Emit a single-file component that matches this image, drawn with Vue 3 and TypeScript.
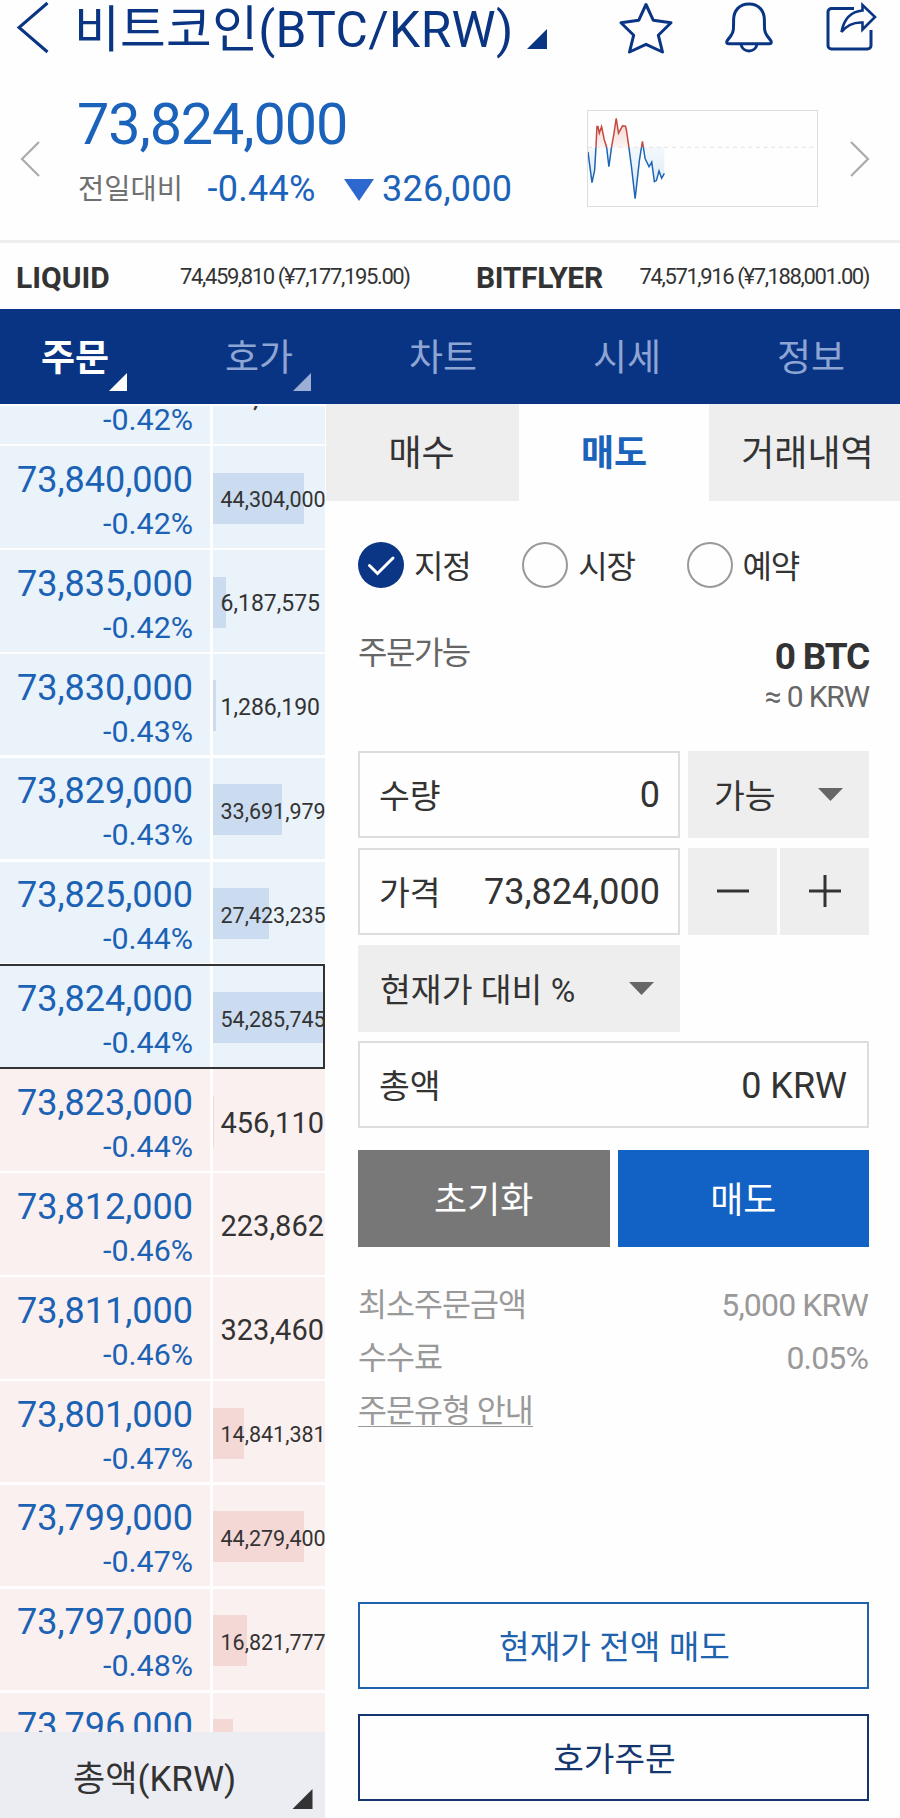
<script setup lang="ts">
import { ref } from 'vue'

interface Quote {
  price: string
  rate: string
  amount: string
  bar: number
  side: 'ask' | 'bid'
  current?: boolean
}

const quotes: Quote[] = [
  { price: '73,842,000', rate: '-0.42%', amount: '44,000', bar: 0, side: 'ask' },
  { price: '73,840,000', rate: '-0.42%', amount: '44,304,000', bar: 91, side: 'ask' },
  { price: '73,835,000', rate: '-0.42%', amount: '6,187,575', bar: 13, side: 'ask' },
  { price: '73,830,000', rate: '-0.43%', amount: '1,286,190', bar: 2.5, side: 'ask' },
  { price: '73,829,000', rate: '-0.43%', amount: '33,691,979', bar: 69, side: 'ask' },
  { price: '73,825,000', rate: '-0.44%', amount: '27,423,235', bar: 56, side: 'ask' },
  { price: '73,824,000', rate: '-0.44%', amount: '54,285,745', bar: 112, side: 'ask', current: true },
  { price: '73,823,000', rate: '-0.44%', amount: '456,110', bar: 1, side: 'bid' },
  { price: '73,812,000', rate: '-0.46%', amount: '223,862', bar: 0, side: 'bid' },
  { price: '73,811,000', rate: '-0.46%', amount: '323,460', bar: 0, side: 'bid' },
  { price: '73,801,000', rate: '-0.47%', amount: '14,841,381', bar: 31, side: 'bid' },
  { price: '73,799,000', rate: '-0.47%', amount: '44,279,400', bar: 91, side: 'bid' },
  { price: '73,797,000', rate: '-0.48%', amount: '16,821,777', bar: 34, side: 'bid' },
  { price: '73,796,000', rate: '-0.48%', amount: '9,821,000', bar: 20, side: 'bid' },
]

// Longer amounts are set smaller so that they stay inside the column.
function amountSize(amount: string): string {
  if (amount.length >= 10) return 'small'
  return amount.length >= 9 ? 'medium' : 'large'
}

const menus = [
  { name: '주문', mark: true },
  { name: '호가', mark: true },
  { name: '차트', mark: false },
  { name: '시세', mark: false },
  { name: '정보', mark: false },
]
const menu = ref('주문')

const sides = ['매수', '매도', '거래내역']
const side = ref('매도')

const kinds = ['지정', '시장', '예약']
const kind = ref('지정')

const spark =
  '82,455 94,548 102,510 106,440 109,378 112,378 116,398 123,378 131,418 138,440 145,500 153,440 160,400 167,353 174,398 186,376 195,377 198,390 205,440 213,500 224,597 237,480 246,423 254,475 266,500 274,486 282,545 288,542 296,513 304,535 312,520'
</script>

<template>
  <div class="page">
    <header class="top">
      <svg class="back" viewBox="0 0 34 54"><path d="M31.5 2 3 26.5 31.5 51" /></svg>
      <h1>비트코인(BTC/KRW)</h1>
      <svg class="corner title-mark" viewBox="0 0 20 20"><path d="M20 0v20H0z" /></svg>
      <div class="actions">
        <svg class="star" viewBox="0 0 54 52">
          <path d="M27 2.5 34.2 18.2 52 20.8 39.3 33.2 43.5 50 27 42.3 10.5 50 14.7 33.2 2 20.8 19.8 18.2Z" />
        </svg>
        <svg class="bell" viewBox="0 0 48 52">
          <path d="M24 2C14 2 8.600 9 8.600 18c0 9.500 0 12-2.500 15.500L2.300 38.500C1 41 2 41.700 4 41.700H44C46 41.700 47 41 45.700 38.500L41.900 33.500C39.400 30 39.400 27.500 39.400 18 39.400 9 34 2 24 2Z" />
          <path d="M16 42.500a8.200 8.200 0 0 0 16 0" />
        </svg>
        <svg class="share" viewBox="0 0 52 50">
          <path d="M28 6.500H5.500a3.500 3.500 0 0 0-3.500 3.500V43.500a3.500 3.500 0 0 0 3.500 3.500H41.500a3.500 3.500 0 0 0 3.500-3.500V28" />
          <path class="arrow" d="M15.500 30C18 16.500 25.500 9.500 36.500 8.500V3L49 15 36.500 27.500V20.500C28 20 21 23 15.500 30Z" />
        </svg>
      </div>
    </header>

    <section class="summary">
      <svg class="chev" viewBox="0 0 20 36"><path d="M19 1 2 18 19 35" /></svg>
      <div class="figures">
        <div class="last">73,824,000</div>
        <div class="change">
          <span class="change-label">전일대비</span>
          <span class="change-rate">-0.44%</span>
          <svg class="down" viewBox="0 0 30 22"><path d="M0 0h30L15 22z" /></svg>
          <span class="change-diff">326,000</span>
        </div>
      </div>
      <svg class="spark" viewBox="82 331 690 288" preserveAspectRatio="none">
        <defs>
          <clipPath id="above"><rect x="82" y="331" width="690" height="110" /></clipPath>
          <clipPath id="below"><rect x="82" y="441" width="690" height="178" /></clipPath>
          <linearGradient id="redFade" gradientUnits="userSpaceOnUse" x1="0" y1="350" x2="0" y2="441">
            <stop offset="0" stop-color="#e3a09a" stop-opacity=".5" />
            <stop offset="1" stop-color="#e3a09a" stop-opacity="0.1" />
          </linearGradient>
          <linearGradient id="blueFade" gradientUnits="userSpaceOnUse" x1="0" y1="441" x2="0" y2="600">
            <stop offset="0" stop-color="#8fbbe6" stop-opacity=".1" />
            <stop offset="1" stop-color="#8fbbe6" stop-opacity=".35" />
          </linearGradient>
        </defs>
        <polygon :points="`82,441 ${spark} 312,441`" fill="url(#redFade)" clip-path="url(#above)" />
        <polygon :points="`82,441 ${spark} 312,441`" fill="url(#blueFade)" clip-path="url(#below)" />
        <path class="base" d="M82 441H762" />
        <polyline class="up-line" :points="spark" clip-path="url(#above)" />
        <polyline class="down-line" :points="spark" clip-path="url(#below)" />
      </svg>
      <svg class="chev next" viewBox="0 0 20 36"><path d="M1 1 18 18 1 35" /></svg>
    </section>

    <section class="markets">
      <b class="m1">LIQUID</b><span class="q1">74,459,810 (¥7,177,195.00)</span>
      <b class="m2">BITFLYER</b><span class="q2">74,571,916 (¥7,188,001.00)</span>
    </section>

    <nav class="menu">
      <div class="menu-grid">
        <a v-for="m in menus" :key="m.name" :class="{ on: m.name === menu }" @click="menu = m.name">
          {{ m.name }}
          <svg v-if="m.mark" class="corner" viewBox="0 0 20 20"><path d="M20 0v20H0z" /></svg>
        </a>
      </div>
    </nav>

    <main class="body">
      <aside class="book">
        <div class="book-view">
          <div class="rows">
            <div v-for="q in quotes" :key="q.price" class="row" :class="[q.side, { current: q.current }]">
              <div class="cell price-cell">
                <span class="price">{{ q.price }}</span>
                <span class="rate">{{ q.rate }}</span>
              </div>
              <div class="cell amount-cell">
                <i class="bar" :style="{ width: q.bar + 'px' }"></i>
                <span class="amount" :class="amountSize(q.amount)">{{ q.amount }}</span>
              </div>
            </div>
          </div>
        </div>
        <div class="book-foot">
          <span>총액(KRW)</span>
          <svg class="corner" viewBox="0 0 20 20"><path d="M20 0v20H0z" /></svg>
        </div>
      </aside>

      <section class="order">
        <div class="sides">
          <a v-for="s in sides" :key="s" :class="{ on: s === side }" @click="side = s">{{ s }}</a>
        </div>

        <div class="form">
          <div class="kinds">
            <label v-for="k in kinds" :key="k" @click="kind = k">
              <svg class="radio" :class="{ on: k === kind }" viewBox="0 0 46 46">
                <circle cx="23" cy="23" r="22" />
                <path v-if="k === kind" d="M11.500 23.500 19.500 31.500 35 16" />
              </svg>
              <span>{{ k }}</span>
            </label>
          </div>

          <div class="available">
            <span class="available-label">주문가능</span>
            <div class="balance">
              <b>0 BTC</b>
              <span>≈ 0 KRW</span>
            </div>
          </div>

          <div class="fields">
            <div class="field"><span>수량</span><em>0</em></div>
            <div class="select">
              <span>가능</span>
              <svg class="caret" viewBox="0 0 25 13"><path d="M0 0h25L12.500 13z" /></svg>
            </div>
            <div class="field"><span>가격</span><em>73,824,000</em></div>
            <div class="steps">
              <button><svg viewBox="0 0 34 34"><path d="M1 17H33" /></svg></button>
              <button><svg viewBox="0 0 34 34"><path d="M1 17H33M17 1V33" /></svg></button>
            </div>
            <div class="select ratio">
              <span>현재가 대비 %</span>
              <svg class="caret" viewBox="0 0 25 13"><path d="M0 0h25L12.500 13z" /></svg>
            </div>
            <div class="field total"><span>총액</span><em>0 KRW</em></div>
          </div>

          <div class="submit">
            <button class="reset">초기화</button>
            <button class="sell">매도</button>
          </div>

          <div class="notes">
            <div><span>최소주문금액</span><em>5,000 KRW</em></div>
            <div><span>수수료</span><em>0.05%</em></div>
            <div><a>주문유형 안내</a></div>
          </div>

          <div class="extra">
            <button class="sell-all">현재가 전액 매도</button>
            <button class="book-order">호가주문</button>
          </div>
        </div>
      </section>
    </main>
  </div>
</template>

<style>
html,
body {
  background: #fefefe;
}
</style>

<style scoped>
* {
  box-sizing: border-box;
}
.page {
  width: 900px;
  height: 1818px;
  overflow: hidden;
  display: flex;
  flex-direction: column;
  background: #fefefe;
  color: #333;
  font-family: Roboto, 'Noto Sans CJK KR', sans-serif;
  line-height: 1.2;
  white-space: nowrap;
}
svg {
  display: block;
  flex: none;
  fill: none;
}
em {
  font-style: normal;
}
button {
  font: inherit;
  color: inherit;
  border: 0;
  padding: 0;
  background: none;
}
.corner path {
  fill: currentColor;
}

.top {
  height: 61px;
  flex: none;
  display: flex;
  align-items: flex-start;
  color: #0a3583;
}
.back {
  width: 34px;
  height: 54px;
  margin: 1px 0 0 16px;
  stroke: currentColor;
  stroke-width: 3;
}
h1 {
  margin: 0 0 0 24px;
  width: 453px;
  font-size: 49.700px;
  font-weight: 400;
  line-height: 61px;
  letter-spacing: 0.350px;
}
.title-mark {
  width: 20px;
  height: 20px;
  margin-top: 29px;
}
.actions {
  display: flex;
  margin-left: 72px;
  stroke: currentColor;
  stroke-width: 3;
  stroke-linejoin: round;
}
.star {
  width: 54px;
  height: 52px;
  margin-top: 2px;
}
.bell {
  width: 48px;
  height: 52px;
  margin: 2px 0 0 51.500px;
}
.share {
  width: 52px;
  height: 50px;
  margin: 2px 0 0 53.500px;
}
.arrow {
  stroke-linejoin: miter;
  stroke-width: 2.600;
}

.summary {
  height: 179px;
  flex: none;
  display: flex;
  align-items: flex-start;
  color: #1b62bb;
}
.chev {
  width: 20px;
  height: 36px;
  margin: 80px 0 0 20px;
  stroke: #ababab;
  stroke-width: 2.200;
}
.figures {
  width: 511px;
  margin: 29px 0 0 36px;
}
.last {
  margin-left: 1px;
  font-size: 57.500px;
  line-height: 69px;
  letter-spacing: -1.100px;
}
.change {
  display: flex;
  align-items: center;
  height: 40px;
  margin-top: 10px;
  font-size: 36px;
  line-height: 40px;
  letter-spacing: 0.250px;
}
.change-label {
  width: 131.500px;
  padding: 2px 0 0 2px;
  font-size: 28.500px;
  letter-spacing: 0;
  color: #707070;
}
.change-rate {
  width: 136.500px;
}
.down {
  width: 30px;
  height: 22px;
  margin-top: 2px;
}
.down path {
  fill: #2c68d0;
}
.change-diff {
  margin-left: 8px;
}
.spark {
  width: 231px;
  height: 97px;
  margin-top: 49px;
  border: 1px solid #ddd;
  stroke-width: 4.500;
}
.base {
  stroke: #e2e2e2;
  stroke-width: 3;
  stroke-dasharray: 12 11;
}
.up-line {
  stroke: #c6493f;
}
.down-line {
  stroke: #1d64b4;
}
.next {
  margin-left: 32px;
}

.markets {
  height: 69px;
  flex: none;
  display: flex;
  align-items: center;
  padding: 3px 0 0 16px;
  border-top: 3px solid #eee;
  font-size: 22px;
  letter-spacing: -1.380px;
}
.markets b {
  font-size: 30px;
}
.markets .m1 {
  width: 164px;
  letter-spacing: 0;
}
.q1 {
  width: 296px;
}
.markets .m2 {
  width: 163.500px;
  letter-spacing: -0.350px;
}

.menu {
  height: 95px;
  flex: none;
  overflow: hidden;
  background: #093484;
}
.menu-grid {
  display: grid;
  grid-template-columns: repeat(5, 184px);
  height: 95px;
  margin-left: -17px;
}
.menu a {
  position: relative;
  display: flex;
  align-items: center;
  justify-content: center;
  padding-top: 6px;
  font-size: 37px;
  color: #8ea5d4;
}
.menu a.on {
  font-weight: 700;
  color: #fff;
}
.menu .corner {
  position: absolute;
  right: 40px;
  bottom: 13px;
  width: 18px;
  height: 18px;
  color: #9caed3;
}
.menu .on .corner {
  color: #fff;
}

.body {
  flex: 1;
  min-height: 0;
  display: flex;
}
.book {
  width: 326px;
  display: flex;
  flex-direction: column;
}
.book-view {
  height: 1328px;
  overflow: hidden;
  border-top: 2px solid #fefefe;
}
.rows {
  margin-top: -63.600px;
}
.row {
  position: relative;
  display: flex;
  gap: 3px;
  width: 325px;
  height: 103.870px;
  padding-bottom: 2.400px;
}
.row.current::after {
  content: '';
  position: absolute;
  left: -3px;
  right: 0;
  top: -2px;
  bottom: 0;
  border: 2.500px solid #333;
}
.cell {
  position: relative;
  overflow: hidden;
}
.ask .cell {
  background: #eaf2fa;
}
.bid .cell {
  background: #faf0ef;
}
.price-cell {
  width: 210px;
  padding: 13.600px 17px 0 0;
  display: flex;
  flex-direction: column;
  align-items: flex-end;
  color: #1b62b5;
}
.price {
  font-size: 36px;
  line-height: 40px;
}
.rate {
  margin-top: 5px;
  font-size: 30.400px;
  line-height: 38px;
}
.amount-cell {
  width: 112px;
  padding-top: 26.500px;
}
.bar {
  display: block;
  height: 51px;
}
.ask .bar {
  background: #cbdcf0;
}
.bid .bar {
  background: #f3d8d6;
}
.amount {
  display: block;
  margin: -49.400px 0 0 7.500px;
  line-height: 51px;
}
.small {
  font-size: 21.500px;
}
.medium {
  font-size: 23px;
}
.large {
  font-size: 29px;
}
.book-foot {
  flex: 1;
  width: 325px;
  display: flex;
  align-items: center;
  background: #ecedf3;
  font-size: 35px;
}
.book-foot span {
  width: 219px;
  padding-top: 9px;
  margin-left: 73px;
}
.book-foot .corner {
  width: 21px;
  height: 20px;
  margin-top: 48px;
}

.order {
  width: 574px;
  display: flex;
  flex-direction: column;
}
.sides {
  display: grid;
  grid-template-columns: 193px 190px 191px;
  height: 97px;
}
.sides a {
  display: flex;
  align-items: center;
  justify-content: center;
  padding-top: 4px;
  background: #eee;
  font-size: 36px;
}
.sides a:first-child {
  padding-right: 2px;
}
.sides a:last-child {
  padding-left: 6px;
}
.sides a.on {
  background: none;
  font-weight: 700;
  color: #1b62bb;
}
.form {
  flex: 1;
  display: flex;
  flex-direction: column;
  padding: 41px 31px 17px 32px;
}
.kinds {
  display: flex;
  height: 46px;
  letter-spacing: -1.200px;
  font-size: 32px;
}
.kinds label {
  display: flex;
  align-items: center;
  width: 164.300px;
}
.kinds span {
  padding: 5px 0 0 10px;
}
.radio {
  width: 46px;
  height: 46px;
  stroke: #999;
  stroke-width: 2;
}
.radio.on {
  stroke: none;
}
.radio.on circle {
  r: 23px;
  fill: #0a3685;
}
.radio path {
  stroke: #fff;
  stroke-width: 3;
  stroke-linecap: round;
}
.available {
  display: flex;
  justify-content: space-between;
  height: 130px;
  margin-top: 33px;
  padding-top: 13px;
  letter-spacing: -1.200px;
}
.available-label {
  font-size: 32px;
  line-height: 39px;
  letter-spacing: -1.500px;
  color: #666;
}
.balance {
  display: flex;
  flex-direction: column;
  align-items: flex-end;
}
.balance b {
  font-size: 37px;
  line-height: 45px;
}
.balance span {
  font-size: 30px;
  line-height: 36px;
  color: #666;
}
.fields {
  display: grid;
  grid-template-columns: 322px 181px;
  grid-auto-rows: 87px;
  gap: 9.800px 8px;
  font-size: 33.500px;
}
.field,
.select {
  display: flex;
  align-items: center;
  justify-content: space-between;
}
.field {
  padding: 0 18px 0 19px;
  border: 2.500px solid #ddd;
}
.field span,
.select span {
  padding-top: 5px;
}
.field em {
  padding-top: 3px;
  font-size: 36px;
}
.select {
  padding: 0 26px;
  background: #eee;
}
.select.ratio {
  padding-left: 22px;
}
.caret {
  width: 25px;
  height: 13px;
}
.caret path {
  fill: #666;
}
.total {
  grid-column: 1 / 3;
  padding-right: 20px;
}
.steps {
  display: flex;
  gap: 3px;
}
.steps button {
  flex: 1;
  display: flex;
  align-items: center;
  justify-content: center;
  background: #eee;
}
.steps svg {
  width: 34px;
  height: 34px;
  stroke: #333;
  stroke-width: 3;
}
.submit {
  display: flex;
  gap: 8px;
  height: 97px;
  margin-top: 22px;
  font-size: 36px;
  color: #fff;
}
.submit button {
  flex: 1;
  padding-top: 5px;
}
.reset {
  background: #777;
}
.sell {
  background: #1261c4;
}
.notes {
  margin-top: 33px;
  font-size: 31.500px;
  line-height: 52.800px;
  letter-spacing: -1px;
  color: #999;
}
.notes div {
  display: flex;
  justify-content: space-between;
}
.notes em {
  margin: -1px 1px 0 0;
  font-size: 32px;
  letter-spacing: -0.850px;
}
.notes a {
  height: 41px;
  border-bottom: 1.500px solid #999;
}
.extra {
  display: flex;
  flex-direction: column;
  gap: 25px;
  margin-top: auto;
  font-size: 33.300px;
}
.extra button {
  height: 87px;
  padding: 5px 0 0 2px;
  border: 2px solid;
}
.sell-all {
  color: #1f62ad;
}
.book-order {
  color: #14366f;
}
</style>
